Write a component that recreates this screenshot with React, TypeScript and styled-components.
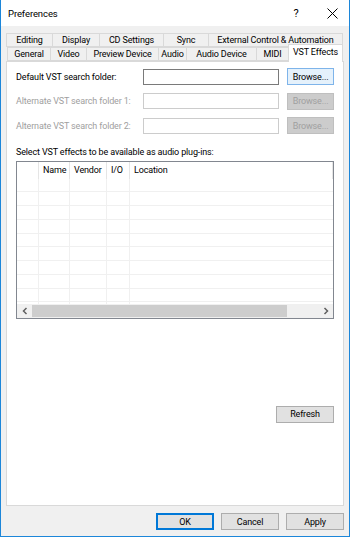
import React from "react";
import styled, { createGlobalStyle } from "styled-components";

const Global = createGlobalStyle`
  html, body { margin: 0; padding: 0; background: #fff; }
  body { font-family: Roboto, "Liberation Sans", Arial, sans-serif; font-size: 9px; letter-spacing: -0.15px; color: #000; }
  * { box-sizing: border-box; }
`;

const Window = styled.div`
  width: 350px;
  height: 537px;
  display: flex;
  flex-direction: column;
  border: 1px solid #1c86d9;
  border-top: none;
  background: #f0f0f0;
  overflow: hidden;
`;

const TitleBar = styled.div`
  height: 26px;
  background: #fff;
  display: flex;
  align-items: center;
  padding-left: 7px;
  font-size: 9.5px;
  letter-spacing: -0.1px;
  color: #000;
`;

const Title = styled.div`
  flex: 1;
`;

const TitleButton = styled.div<{ $w: number }>`
  width: ${(p) => p.$w}px;
  height: 26px;
  display: flex;
  align-items: center;
  justify-content: center;
  font-size: 11px;
`;

const Body = styled.div`
  flex: 1;
  display: flex;
  flex-direction: column;
  padding: 7px 5px 6px 4px;
`;

const TabRow = styled.div<{ $indent: number }>`
  display: flex;
  align-items: flex-end;
  height: 14px;
  padding-left: ${(p) => p.$indent}px;
`;

const Tab = styled.div<{ $w: number; $active?: boolean }>`
  width: ${(p) => p.$w}px;
  height: ${(p) => (p.$active ? 18 : 14)}px;
  margin-bottom: ${(p) => (p.$active ? -1 : 0)}px;
  border: 1px solid #d9d9d9;
  border-bottom: ${(p) => (p.$active ? "none" : "1px solid #d9d9d9")};
  margin-right: -1px;
  background: ${(p) => (p.$active ? "#fff" : "#f0f0f0")};
  position: relative;
  z-index: ${(p) => (p.$active ? 2 : 1)};
  display: flex;
  align-items: center;
  justify-content: center;
  padding-bottom: ${(p) => (p.$active ? 3 : 0)}px;
  white-space: nowrap;
  font-size: 9px;
`;

const Panel = styled.div`
  flex: 1;
  background: #fff;
  border: 1px solid #d9d9d9;
  margin-left: 1px;
  padding: 6px 9px 0 9px;
  display: flex;
  flex-direction: column;
`;

const FolderRow = styled.div`
  display: flex;
  align-items: center;
  height: 17px;
  margin-bottom: 7.5px;
`;

const FolderLabel = styled.div<{ $disabled?: boolean }>`
  width: 127px;
  color: ${(p) => (p.$disabled ? "#a0a0a0" : "#000")};
  white-space: nowrap;
`;

const Field = styled.div<{ $disabled?: boolean }>`
  width: 137px;
  height: 16px;
  border: 1px solid ${(p) => (p.$disabled ? "#cccccc" : "#7a7a7a")};
  background: #fff;
  margin-right: 8px;
`;

const Button = styled.div<{ $w: number; $disabled?: boolean; $focus?: boolean; $hover?: boolean }>`
  width: ${(p) => p.$w}px;
  height: 17px;
  display: flex;
  align-items: center;
  justify-content: center;
  background: ${(p) => (p.$disabled ? "#cccccc" : p.$hover ? "#e5f1fb" : "#e1e1e1")};
  border: 1px solid
    ${(p) => (p.$disabled ? "#bfbfbf" : p.$hover ? "#7eb4ea" : p.$focus ? "#0078d7" : "#adadad")};
  box-shadow: ${(p) => (p.$focus ? "inset 0 0 0 1px #0078d7" : "none")};
  color: ${(p) => (p.$disabled ? "#a0a0a0" : "#000")};
  white-space: nowrap;
`;

const ListLabel = styled.div`
  margin-top: 4px;
  height: 12px;
  line-height: 12px;
`;

const ListBox = styled.div`
  margin-top: 3px;
  height: 158px;
  border: 1px solid #828790;
  display: flex;
  flex-direction: column;
  overflow: hidden;
`;

const Grid = styled.div`
  flex: 1;
  display: grid;
  grid-template-columns: 22px 31px 37px 23px 1fr;
  grid-template-rows: 17px;
  grid-auto-rows: 13.75px;
  overflow: hidden;
`;

const HeadCell = styled.div`
  border-right: 1px solid #e5e5e5;
  padding-left: 4px;
  display: flex;
  align-items: center;
  white-space: nowrap;
  &:last-child { border-right: none; }
`;

const Cell = styled.div<{ $last?: boolean }>`
  border-right: ${(p) => (p.$last ? "none" : "1px solid #f0f0f0")};
  border-bottom: 1px solid #f0f0f0;
`;

const ScrollBar = styled.div`
  height: 14px;
  background: #f0f0f0;
  display: flex;
  align-items: stretch;
`;

const ScrollArrow = styled.div`
  width: 15px;
  display: flex;
  align-items: center;
  justify-content: center;
`;

const ScrollTrack = styled.div`
  flex: 1;
  display: flex;
  align-items: center;
`;

const Thumb = styled.div`
  height: 12px;
  width: 255px;
  background: #cdcdcd;
`;

const RefreshRow = styled.div`
  display: flex;
  justify-content: flex-end;
  margin-top: 87px;
`;

const Footer = styled.div`
  display: flex;
  justify-content: flex-end;
  gap: 7px;
  margin-top: 7px;
  height: 17px;
`;

const Chevron = ({ dir }: { dir: "l" | "r" }) => (
  <svg width="6" height="8" viewBox="0 0 6 8">
    <path
      d={dir === "l" ? "M4.5 1 L1.5 4 L4.5 7" : "M1.5 1 L4.5 4 L1.5 7"}
      fill="none"
      stroke="#606060"
      strokeWidth="1.5"
    />
  </svg>
);

const CloseIcon = () => (
  <svg width="11" height="11" viewBox="0 0 11 11">
    <path d="M0.5 0.5 L10.5 10.5 M10.5 0.5 L0.5 10.5" stroke="#000" strokeWidth="1" />
  </svg>
);

const row1 = [
  { t: "Editing", w: 47 },
  { t: "Display", w: 48 },
  { t: "CD Settings", w: 65 },
  { t: "Sync", w: 46 },
  { t: "External Control & Automation", w: 135 },
];
const row2 = [
  { t: "General", w: 44 },
  { t: "Video", w: 37 },
  { t: "Preview Device", w: 73 },
  { t: "Audio", w: 29 },
  { t: "Audio Device", w: 71 },
  { t: "MIDI", w: 33 },
];

const folders = [
  { label: "Default VST search folder:", disabled: false },
  { label: "Alternate VST search folder 1:", disabled: true },
  { label: "Alternate VST search folder 2:", disabled: true },
];

export default function App() {
  const rows = Array.from({ length: 10 });
  return (
    <>
      <Global />
      <Window>
        <TitleBar>
          <Title>Preferences</Title>
          <TitleButton $w={38}>?</TitleButton>
          <TitleButton $w={34}>
            <CloseIcon />
          </TitleButton>
        </TitleBar>
        <Body>
          <TabRow $indent={1}>
            {row1.map((t) => (
              <Tab key={t.t} $w={t.w}>
                {t.t}
              </Tab>
            ))}
          </TabRow>
          <TabRow $indent={2}>
            {row2.map((t) => (
              <Tab key={t.t} $w={t.w}>
                {t.t}
              </Tab>
            ))}
            <Tab $w={55} $active>
              VST Effects
            </Tab>
          </TabRow>
          <Panel>
            {folders.map((f, i) => (
              <FolderRow key={f.label}>
                <FolderLabel $disabled={f.disabled}>{f.label}</FolderLabel>
                <Field $disabled={f.disabled} />
                <Button $w={47} $disabled={f.disabled} $hover={i === 0}>
                  Browse...
                </Button>
              </FolderRow>
            ))}
            <ListLabel>Select VST effects to be available as audio plug-ins:</ListLabel>
            <ListBox>
              <Grid>
                <HeadCell />
                <HeadCell>Name</HeadCell>
                <HeadCell>Vendor</HeadCell>
                <HeadCell>I/O</HeadCell>
                <HeadCell>Location</HeadCell>
                {rows.map((_, r) =>
                  [0, 1, 2, 3, 4].map((c) => <Cell key={`${r}-${c}`} $last={c === 4} />)
                )}
              </Grid>
              <ScrollBar>
                <ScrollArrow>
                  <Chevron dir="l" />
                </ScrollArrow>
                <ScrollTrack>
                  <Thumb />
                </ScrollTrack>
                <ScrollArrow>
                  <Chevron dir="r" />
                </ScrollArrow>
              </ScrollBar>
            </ListBox>
            <RefreshRow>
              <Button $w={58}>Refresh</Button>
            </RefreshRow>
          </Panel>
          <Footer>
            <Button $w={58} $focus>
              OK
            </Button>
            <Button $w={58}>Cancel</Button>
            <Button $w={58}>Apply</Button>
          </Footer>
        </Body>
      </Window>
    </>
  );
}
